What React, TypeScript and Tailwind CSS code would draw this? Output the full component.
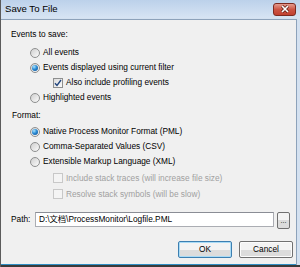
import React from "react";

// Windows 7 (basic theme) "Save To File" dialog

const Radio = ({ checked = false }: { checked?: boolean }) => (
  <span className="w-[10px] h-[10px] shrink-0 rounded-full border border-[#8e8f8f] bg-linear-to-br from-[#cfcfcf] to-[#fbfbfb] flex items-center justify-center">
    {checked && (
      <span className="w-[6px] h-[6px] rounded-full bg-[radial-gradient(circle_at_35%_30%,#a8e4ff_0%,#2a8ad4_45%,#0c4a8c_100%)]" />
    )}
  </span>
);

const Check = ({
  checked = false,
  disabled = false,
}: {
  checked?: boolean;
  disabled?: boolean;
}) => (
  <span
    className={
      disabled
        ? "w-[10px] h-[10px] shrink-0 border border-[#c8c8c8] bg-[#f4f4f4]"
        : "w-[10px] h-[10px] shrink-0 border border-[#8e8f8f] bg-linear-to-br from-[#dcdcdc] to-[#fbfbfb] flex items-center justify-center"
    }
  >
    {checked && (
      <svg width="8" height="8" viewBox="0 0 8 8">
        <path
          d="M1 4.2 L3 6.4 L7 1"
          fill="none"
          stroke="#21457e"
          strokeWidth="1.4"
        />
      </svg>
    )}
  </span>
);

const Option = ({
  checked,
  label,
}: {
  checked?: boolean;
  label: string;
}) => (
  <div className="h-[15px] flex items-center pl-[29px] gap-[3px]">
    <Radio checked={checked} />
    <span>{label}</span>
  </div>
);

const Button = ({
  label,
  isDefault = false,
}: {
  label: string;
  isDefault?: boolean;
}) => (
  <div
    className={
      "w-[54px] h-[17px] rounded-[2px] border flex items-center justify-center bg-linear-to-b from-[#f3f3f3] from-50% to-[#dcdcdc] to-50% " +
      (isDefault ? "border-[#3c7fb1] shadow-[inset_0_0_0_1px_#a9dbf6]" : "border-[#707070] shadow-[inset_0_0_0_1px_#fcfcfc]")
    }
  >
    {label}
  </div>
);

export default function App() {
  return (
    <div className="w-[300px] h-[267px] bg-[#d4e1f0] border-l border-[#5b5b5b] flex flex-col font-['Liberation_Sans','Noto_Sans_CJK_SC',sans-serif] text-[8.3px] text-black leading-none">
      {/* Title bar */}
      <div className="h-[18px] shrink-0 flex items-center justify-between pl-[4px] pr-[4px] bg-linear-to-b from-[#bcd1ea] to-[#d7e4f3]">
        <span className="text-[9.6px] text-black">Save To File</span>
        <div className="w-[23px] h-[13px] rounded-[3px] border border-[#7d2a20] bg-linear-to-b from-[#e49b8f] via-[#cc5444] to-[#c14030] flex items-center justify-center">
          <svg width="10" height="8" viewBox="0 0 10 8">
            <path d="M2 1 L8 7 M8 1 L2 7" stroke="#5a1a12" strokeWidth="3" />
            <path d="M2 1 L8 7 M8 1 L2 7" stroke="#ffffff" strokeWidth="1.7" />
          </svg>
        </div>
      </div>

      {/* Client area */}
      <div className="flex-1 flex flex-col mt-[1px] mr-[3px] border-t border-r border-[#8da2ba] bg-[#f0f0f0]">
        <div className="flex-1 flex flex-col pt-[7px]">
          <div className="h-[15px] flex items-center pl-[10px]">Events to save:</div>
          <div className="mt-[3px]">
            <Option label="All events" />
            <Option checked label="Events displayed using current filter" />
            <div className="h-[15px] flex items-center pl-[52px] gap-[3px]">
              <Check checked />
              <span>Also include profiling events</span>
            </div>
            <Option label="Highlighted events" />
          </div>

          <div className="h-[15px] mt-[3px] flex items-center pl-[11px]">Format:</div>
          <div className="mt-[1px]">
            <Option checked label="Native Process Monitor Format (PML)" />
            <Option label="Comma-Separated Values (CSV)" />
            <Option label="Extensible Markup Language (XML)" />
          </div>
          <div className="mt-[1px] text-[#a0a0a0]">
            <div className="h-[16px] flex items-center pl-[52px] gap-[3px]">
              <Check disabled />
              <span>Include stack traces (will increase file size)</span>
            </div>
            <div className="h-[16px] flex items-center pl-[52px] gap-[3px]">
              <Check disabled />
              <span>Resolve stack symbols (will be slow)</span>
            </div>
          </div>

          <div className="mt-[10px] h-[18px] flex items-start pl-[10px] pr-[6px]">
            <span className="w-[24px] h-[15px] flex items-center">Path:</span>
            <div className="w-[240px] h-[15px] border border-[#abadb3] border-t-[#8a8d95] bg-white flex items-center pl-[3px]">
              D:\文档\ProcessMonitor\Logfile.PML
            </div>
            <div className="ml-[3px] w-[13px] h-[17px] rounded-[2px] border border-[#707070] bg-linear-to-b from-[#f3f3f3] from-50% to-[#dcdcdc] to-50% flex items-end justify-center pb-[4px] text-[7px]">
              ...
            </div>
          </div>

          <div className="mt-[11px] flex justify-end gap-[7px] pr-[3px]">
            <Button label="OK" isDefault />
            <Button label="Cancel" />
          </div>
        </div>
        <div className="h-[1px] bg-[#2f8ec4]" />
      </div>
      <div className="h-[2px] bg-[#3a3a3a]" />
    </div>
  );
}
